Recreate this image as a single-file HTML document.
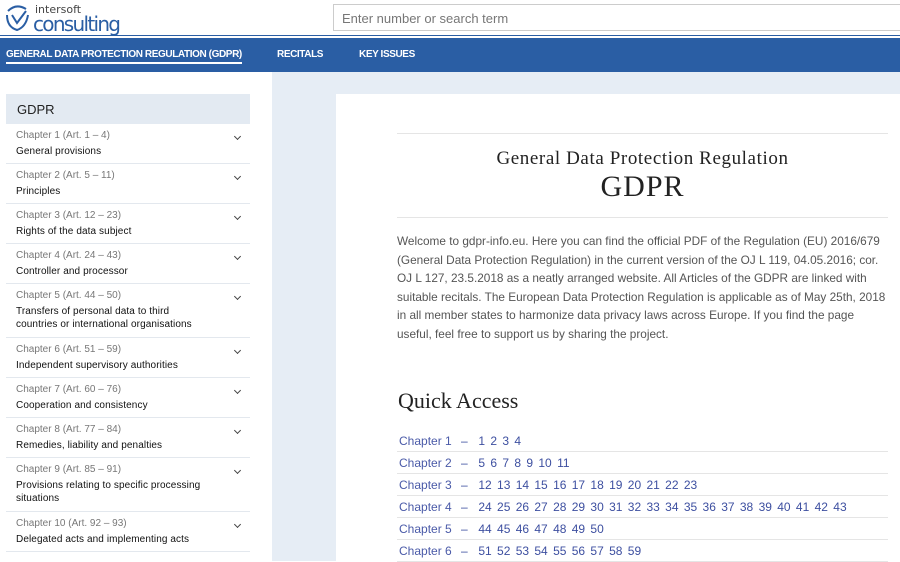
<!DOCTYPE html>
<html><head><meta charset="utf-8"><style>
*{margin:0;padding:0;box-sizing:border-box}
body{width:900px;height:561px;overflow:hidden;background:#fff;font-family:"Liberation Sans",sans-serif;position:relative}
.hdr{position:absolute;left:0;top:0;width:900px;height:36px;border-bottom:1px solid #2a5ea4}
.logo{position:absolute;left:4px;top:1px}
.search{position:absolute;left:333px;top:4px;width:580px;height:27px;border:1px solid #ccc;font-size:13px;color:#777;padding:6px 8px}
.nav{position:absolute;left:0;top:38px;width:900px;height:34px;background:#2a5ea4;color:#fff;font-weight:bold;font-size:10px;letter-spacing:-0.4px}
.nav span{position:absolute;top:11px}
.main{position:absolute;left:272px;top:72px;width:628px;height:489px;background:#e6edf5}
.panel{position:absolute;left:336px;top:94px;width:564px;height:467px;background:#fff}
.side{position:absolute;left:6px;top:94px;width:244px}
.side .g{height:30px;background:#e3eaf2;font-size:13px;padding:8px 11px;color:#222}
.it{border-bottom:1px solid #e3e8ee;padding:6px 40px 0 10px;position:relative;height:40px}
.it.t{height:54px}
.it .a{font-size:10px;color:#777}
.it .b{font-size:10px;color:#111;margin-top:4px;line-height:13px;letter-spacing:0.1px}
.it:after{content:"";position:absolute;right:10px;top:10px;width:4px;height:4px;border-right:1px solid #444;border-bottom:1px solid #444;transform:rotate(45deg)}
.hr{position:absolute;left:397px;width:491px;height:1px;background:#e5e5e5}
.serif{font-family:"Liberation Serif",serif;color:#222;position:absolute}
.p{position:absolute;left:397px;top:232px;width:492px;font-size:11.8px;line-height:18.6px;color:#555}
.qa{position:absolute;left:397px;top:430px;width:491px;font-size:12px;color:#3d4fa0}
.qa div{height:22px;line-height:22px;border-bottom:1px solid #e5e5e5;padding-left:2px;white-space:nowrap;word-spacing:2px}
.qa .c{display:inline-block;width:62px;color:#4a5aa8;word-spacing:0}
</style></head><body>
<div class="hdr">
<svg class="logo" width="125" height="34" viewBox="0 0 125 34"><path d="M4 10 Q12 2 22 8 M3 14 Q3 26 13 29 Q22 26 24 14 M8 14 L13 22 L22 10" fill="none" stroke="#2a5ea4" stroke-width="2"/>
<text x="31" y="12" font-family="DejaVu Sans" font-size="11" fill="#444">intersoft</text>
<text x="29" y="30" font-family="DejaVu Sans" font-size="20" fill="#2a5ea4" textLength="88">consulting</text></svg>
<div class="search">Enter number or search term</div>
</div>
<div class="nav"><span style="left:6px;border-bottom:2px solid #fff;padding-bottom:2px">GENERAL DATA PROTECTION REGULATION (GDPR)</span><span style="left:277px">RECITALS</span><span style="left:359px">KEY ISSUES</span></div>
<div class="main"></div>
<div class="panel"></div>
<div class="side">
<div class="g">GDPR</div>
<div class="it"><div class="a">Chapter 1 (Art. 1 – 4)</div><div class="b">General provisions</div></div>
<div class="it"><div class="a">Chapter 2 (Art. 5 – 11)</div><div class="b">Principles</div></div>
<div class="it"><div class="a">Chapter 3 (Art. 12 – 23)</div><div class="b">Rights of the data subject</div></div>
<div class="it"><div class="a">Chapter 4 (Art. 24 – 43)</div><div class="b">Controller and processor</div></div>
<div class="it t"><div class="a">Chapter 5 (Art. 44 – 50)</div><div class="b">Transfers of personal data to third<br>countries or international organisations</div></div>
<div class="it"><div class="a">Chapter 6 (Art. 51 – 59)</div><div class="b">Independent supervisory authorities</div></div>
<div class="it"><div class="a">Chapter 7 (Art. 60 – 76)</div><div class="b">Cooperation and consistency</div></div>
<div class="it"><div class="a">Chapter 8 (Art. 77 – 84)</div><div class="b">Remedies, liability and penalties</div></div>
<div class="it t"><div class="a">Chapter 9 (Art. 85 – 91)</div><div class="b">Provisions relating to specific processing<br>situations</div></div>
<div class="it"><div class="a">Chapter 10 (Art. 92 – 93)</div><div class="b">Delegated acts and implementing acts</div></div>
</div>
<div class="hr" style="top:133px"></div>
<div class="serif" style="left:397px;width:491px;text-align:center;top:148px;font-size:19px;letter-spacing:0.6px">General Data Protection Regulation</div>
<div class="serif" style="left:397px;width:491px;text-align:center;top:170px;font-size:30px;letter-spacing:1px">GDPR</div>
<div class="hr" style="top:217px"></div>
<div class="p">Welcome to gdpr-info.eu. Here you can find the official PDF of the Regulation (EU) 2016/679 (General Data Protection Regulation) in the current version of the OJ L 119, 04.05.2016; cor. OJ L 127, 23.5.2018 as a neatly arranged website. All Articles of the GDPR are linked with suitable recitals. The European Data Protection Regulation is applicable as of May 25th, 2018 in all member states to harmonize data privacy laws across Europe. If you find the page useful, feel free to support us by sharing the project.</div>
<div class="serif" style="left:398px;top:388px;font-size:22px">Quick Access</div>
<div class="qa">
<div><span class="c">Chapter 1</span>–&nbsp; 1 2 3 4</div>
<div><span class="c">Chapter 2</span>–&nbsp; 5 6 7 8 9 10 11</div>
<div><span class="c">Chapter 3</span>–&nbsp; 12 13 14 15 16 17 18 19 20 21 22 23</div>
<div><span class="c">Chapter 4</span>–&nbsp; 24 25 26 27 28 29 30 31 32 33 34 35 36 37 38 39 40 41 42 43</div>
<div><span class="c">Chapter 5</span>–&nbsp; 44 45 46 47 48 49 50</div>
<div><span class="c">Chapter 6</span>–&nbsp; 51 52 53 54 55 56 57 58 59</div>
</div>
</body></html>
